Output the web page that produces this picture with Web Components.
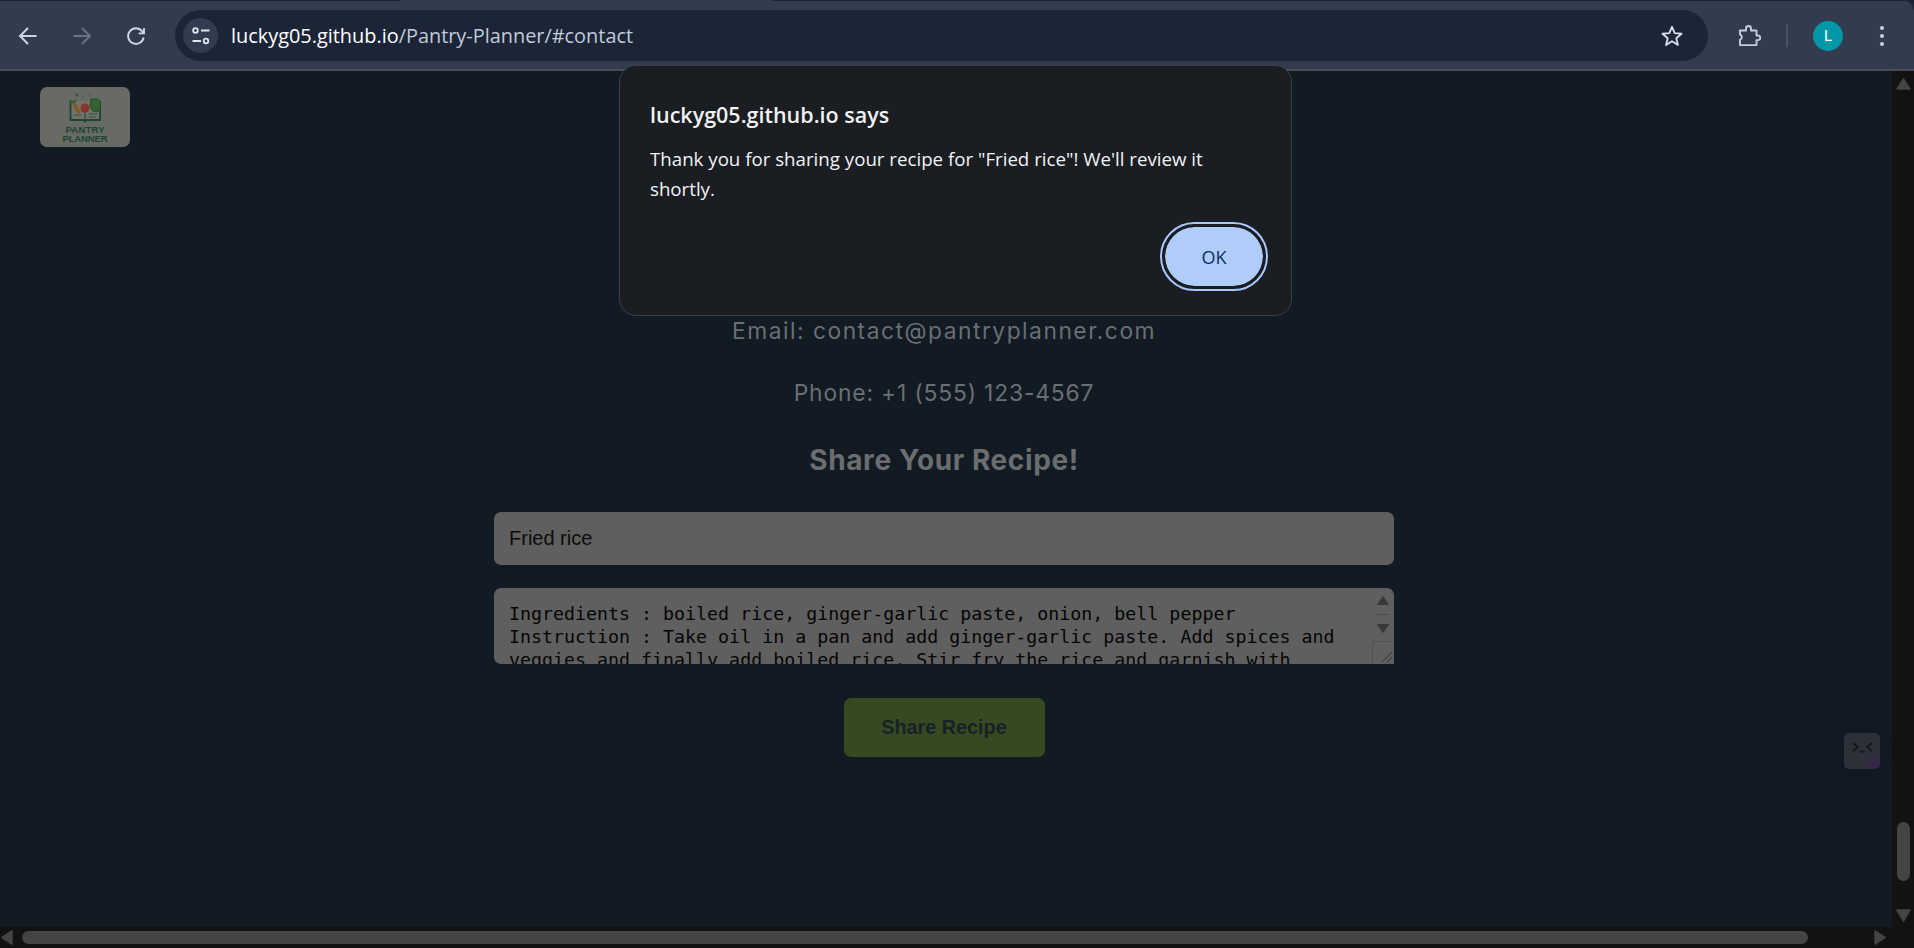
<!DOCTYPE html>
<html lang="en">
<head>
<meta charset="utf-8">
<title>Pantry Planner</title>
<style>
html,body{margin:0;height:100%;overflow:hidden;background:#121a23}
x-browser{height:948px}
</style>
</head>
<body>
<x-browser>
  <x-toolbar slot="toolbar" url-host="luckyg05.github.io" url-path="/Pantry-Planner/#contact"></x-toolbar>
  <x-page slot="page">
    <x-logo></x-logo>
    <x-contact></x-contact>
    <x-widget></x-widget>
    <x-alert></x-alert>
  </x-page>
</x-browser>
<script>
function def(name, html){
  customElements.define(name, class extends HTMLElement{
    constructor(){super();this.attachShadow({mode:'open'}).innerHTML=typeof html==='function'?html(this):html;}
  });
}
const arrow=(d,c,w=15,h=15)=>`<svg width="${w}" height="${h}" viewBox="0 0 15 15"><path d="${d}" fill="${c}" stroke="${c}" stroke-width="1.5" stroke-linejoin="round"/></svg>`;

def('x-browser',`<style>
:host{display:grid;grid-template-columns:1fr 22px;grid-template-rows:71px 856px 21px;width:1914px;background:#121212}
.t{grid-column:1/3;background:#1c2538}
.p{position:relative;min-width:0;min-height:0}
.v{display:flex;flex-direction:column;align-items:center;background:#121212}
.up{margin-top:5px;height:15px}
.sp{flex:1}
.vt{width:13px;height:59px;border-radius:7px;background:#444}
.dn{margin:27px 0 4px;height:15px}
.h{grid-column:1/2;display:flex;align-items:center;background:#121212}
.ht{width:1786px;height:13px;border-radius:7px;background:#444;margin-left:7px}
.rarrow{margin-left:65px}
.c{background:#121212}
svg{display:block}
</style>
<div class="t"><slot name="toolbar"></slot></div>
<div class="p"><slot name="page"></slot></div>
<div class="v"><div class="up">${arrow('M7.5 3L14 13H1Z','#444')}</div><div class="sp"></div><div class="vt"></div><div class="dn">${arrow('M1 2H14L7.5 13Z','#444')}</div></div>
<div class="h">${arrow('M12 1V14L2 7.5Z','#444')}<div class="ht"></div><div class="rarrow">${arrow('M2 1V14L12 7.5Z','#444')}</div></div>
<div class="c"></div>`);

def('x-toolbar',el=>`<style>
:host{display:flex;align-items:center;height:71px;box-sizing:border-box;background:linear-gradient(90deg,#1c2538 400px,transparent 400px,transparent 772px,#1c2538 772px) top/100% 1px no-repeat,#333c4e;border-bottom:2px solid #484d59;border-radius:0 12px 0 0;font-family:"Open Sans","Noto Sans",sans-serif;padding:2px 0 0 16px}
svg{display:block;flex:none}
.nav{display:flex;gap:30px;margin-right:27px}
.omni{display:flex;align-items:center;width:1533px;height:51px;border-radius:26px;background:#1c2538;box-sizing:border-box;padding:0 24px 0 8px;flex:none}
.tune{width:35px;height:35px;border-radius:50%;background:#333c4e;display:flex;align-items:center;justify-content:center;flex:none}
.url{flex:1;margin-left:13px;font-size:19.9px;color:#c2cad8;white-space:nowrap}
.url b{font-weight:400;color:#fff}
.ext{margin-left:29px}
.div{width:2px;height:23px;background:#4a5263;margin:0 25px 0 25px;flex:none}
.av{width:30px;height:30px;border-radius:50%;background:#0097a7;color:#fff;font:400 15px Roboto,sans-serif;display:flex;align-items:center;justify-content:center;flex:none}
.more{margin-left:27px}
</style>
<div class="nav">
<svg width="24" height="24" viewBox="0 0 24 24" fill="none" stroke="#cdd5e3" stroke-width="1.9"><path d="M20.5 12H4.5M12 4l-8 8 8 8"/></svg>
<svg width="24" height="24" viewBox="0 0 24 24" fill="none" stroke="#6b7485" stroke-width="1.9"><path d="M3.5 12H19.5M12 4l8 8-8 8"/></svg>
<svg width="24" height="24" viewBox="0 0 24 24" fill="none" stroke="#cdd5e3" stroke-width="1.9"><path d="M19.6 13.5A7.8 7.8 0 1 1 18 7.2L20 9.2M20 4v5.4h-5.4"/></svg>
</div>
<div class="omni">
<div class="tune"><svg width="20" height="20" viewBox="0 0 20 20" fill="none" stroke="#dfe5ef" stroke-width="1.8"><circle cx="4.5" cy="4.5" r="2.3"/><path d="M10 4.5h8.5M1.5 15h8.5"/><circle cx="15" cy="15" r="2.3"/></svg></div>
<div class="url"><b>${el.getAttribute('url-host')}</b>${el.getAttribute('url-path')}</div>
<svg width="24" height="24" viewBox="0 0 24 24" fill="none" stroke="#d5dbe6" stroke-width="1.9" stroke-linejoin="round"><path d="M12 2.8l2.7 6.3 6.8.6-5.2 4.5 1.6 6.7-5.9-3.6-5.9 3.6 1.6-6.7-5.2-4.5 6.8-.6z"/></svg>
</div>
<svg class="ext" width="24" height="24" viewBox="0 0 24 24" fill="none" stroke="#c5cddb" stroke-width="1.9" stroke-linejoin="round"><path d="M3 6.500h6V4.500a2.500 2.500 0 0 1 5 0v2h5.500v5h1.500a2.300 2.300 0 0 1 0 4.600h-1.500v5H3v-5.200a2.900 2.900 0 0 0 0-5.400z"/></svg>
<div class="div"></div>
<div class="av">L</div>
<svg class="more" width="24" height="24" viewBox="0 0 24 24" fill="#c5cddb"><circle cx="12" cy="4" r="2.1"/><circle cx="12" cy="12" r="2.1"/><circle cx="12" cy="20" r="2.1"/></svg>`);

def('x-page',`<style>
:host{display:flow-root;position:relative;height:856px;background:#121a23}
</style><slot></slot>`);

def('x-logo',`<style>
:host{display:block;width:90px;height:60px;margin:16px 0 0 40px;background:#676a65;border-radius:7px}
svg{display:block}
text{font-family:"Liberation Sans",sans-serif;font-weight:700;fill:#1c4432;text-anchor:middle}
</style>
<svg width="90" height="60" viewBox="0 0 90 60">
<circle cx="37" cy="8" r="1.6" fill="#3d5148"/><circle cx="43" cy="9" r=".7" fill="#3d5148"/><circle cx="50" cy="7.5" r="1.6" fill="none" stroke="#555" stroke-width=".6"/>
<path d="M30.5 14V33h13l1.500 1.500L46.500 33H60V14" fill="#71736a" stroke="#1c4432" stroke-width="1.8"/>
<path d="M45 20V33" stroke="#1c4432" stroke-width="1"/>
<path d="M32 16l5 1.800 1 2 3 5-2 2-4-3.500z" fill="#85562a"/><path d="M31 13l3 3 2-3" stroke="#2b6032" fill="none" stroke-width="1.500"/>
<circle cx="45" cy="21" r="4.500" fill="#85362b"/>
<path d="M51 12h7l2.500 3v6l-3 4-5-1-2.500-5z" fill="#346332" stroke="#1c4432" stroke-width=".8"/>
<path d="M34 28h7M49 27h8M49 30h7" stroke="#33483c" stroke-width=".8"/>
<text x="45" y="45.500" font-size="9.500" textLength="39">PANTRY</text>
<text x="45" y="54.500" font-size="9.500" textLength="45">PLANNER</text>
</svg>`);

def('x-contact',`<style>
:host{display:flex;flex-direction:column;align-items:center;width:1888px;margin-top:167px;font-family:Inter,"Open Sans",sans-serif;color:#6a6f73}
p{margin:0;font-size:22.8px;line-height:33px;letter-spacing:.85px;text-align:center}
p.em{letter-spacing:1.5px}
p+p{margin-top:29px}
h2{margin:32px 0 0;font-size:28px;line-height:39px;font-weight:700;letter-spacing:.6px;color:#6b6d6f}
.in{box-sizing:border-box;width:900px;height:53px;margin-top:32px;border-radius:7px;background:#5f5f5f;color:#0c0c0c;font:20px/53px "Liberation Sans",sans-serif;padding-left:15px}
.ta{box-sizing:border-box;position:relative;width:900px;height:76px;margin-top:23px;border-radius:7px 7px 0 7px;background:#5f5f5f;color:#050505;overflow:hidden;padding:14px 0 0 15px;font:18.3px/23px "DejaVu Sans Mono","Liberation Mono",monospace;white-space:pre}
.sb{position:absolute;right:0;top:0;bottom:0;width:22px}
.sb svg{position:absolute;left:4px}
.line{position:absolute;left:4px;right:4px;top:26px;height:1px;background:#4d4d4d}
.rz{position:absolute;right:0;bottom:0;width:21px;height:22px;border:1px solid #505050;border-width:1px 0 0 1px}
.b{box-sizing:border-box;width:201px;height:59px;margin-top:34px;border-radius:7px;background:#374920;color:#182127;font:700 19.8px/59px "Liberation Sans",sans-serif;text-align:center}
svg{display:block}
</style>
<p class="em">Email: contact@pantryplanner.com</p>
<p>Phone: +1 (555) 123-4567</p>
<h2>Share Your Recipe!</h2>
<div class="in">Fried rice</div>
<div class="ta">Ingredients : boiled rice, ginger-garlic paste, onion, bell pepper
Instruction : Take oil in a pan and add ginger-garlic paste. Add spices and
veggies and finally add boiled rice. Stir fry the rice and garnish with<div class="sb"><svg style="top:7px" width="14" height="11" viewBox="0 0 14 11"><path d="M7 1.500L12.500 9.500H1.500Z" fill="#383838" stroke="#383838" stroke-linejoin="round"/></svg><div class="line"></div><svg style="top:35px" width="14" height="11" viewBox="0 0 14 11"><path d="M1.500 1.500H12.500L7 9.500Z" fill="#383838" stroke="#383838" stroke-linejoin="round"/></svg><div class="rz"><svg style="left:8px;top:9px" width="12" height="12" viewBox="0 0 12 12" fill="none" stroke="#333" stroke-width="1"><path d="M1 11L11 1M6 11L11 6"/></svg></div></div></div>
<div class="b">Share Recipe</div>`);

def('x-widget',`<style>
:host{display:block;position:absolute;left:1844px;top:662px;width:36px;height:36px;border-radius:5px;background:radial-gradient(circle at 100% 100%,#3a1f55 0,#2e3039 35%,#2d2f38 100%);box-shadow:0 0 14px rgba(0,0,0,.15)}
svg{display:block}
</style>
<svg width="36" height="36" viewBox="0 0 36 36" fill="none" stroke="#13171f" stroke-width="1.800"><path d="M9 10l5 4-5 4M28 10l-5 4 5 4M16 17.500c1 1.800 3.500 1.800 4.500 0"/></svg>`);

def('x-alert',`<style>
:host{position:absolute;left:619px;top:-6px;box-sizing:border-box;width:673px;height:251px;background:#1a1d21;border:1px solid #3c3f43;border-radius:17px;padding:34px 30px 0;color:#e8eaed;font-family:"Open Sans","Noto Sans",sans-serif}
h1{margin:0;font-size:21.5px;line-height:30px;font-weight:600;color:#f0f1f3}
p{margin:14px 0 0;font-size:18.7px;line-height:30px;color:#f1f3f5}
.row{display:flex;justify-content:flex-end;margin-top:18px;margin-right:-7px}
.ok{box-sizing:border-box;width:104px;height:65px;margin:2px;border-radius:35px;background:#b0ccf9;background-clip:padding-box;border:3px solid #1a1d21;outline:2px solid #a8c7fa;color:#062e6f;font-size:18px;font-weight:500;display:flex;align-items:center;justify-content:center}
</style>
<h1>luckyg05.github.io says</h1>
<p>Thank you for sharing your recipe for "Fried rice"! We'll review it shortly.</p>
<div class="row"><div class="ok">OK</div></div>`);
</script>
</body>
</html>
